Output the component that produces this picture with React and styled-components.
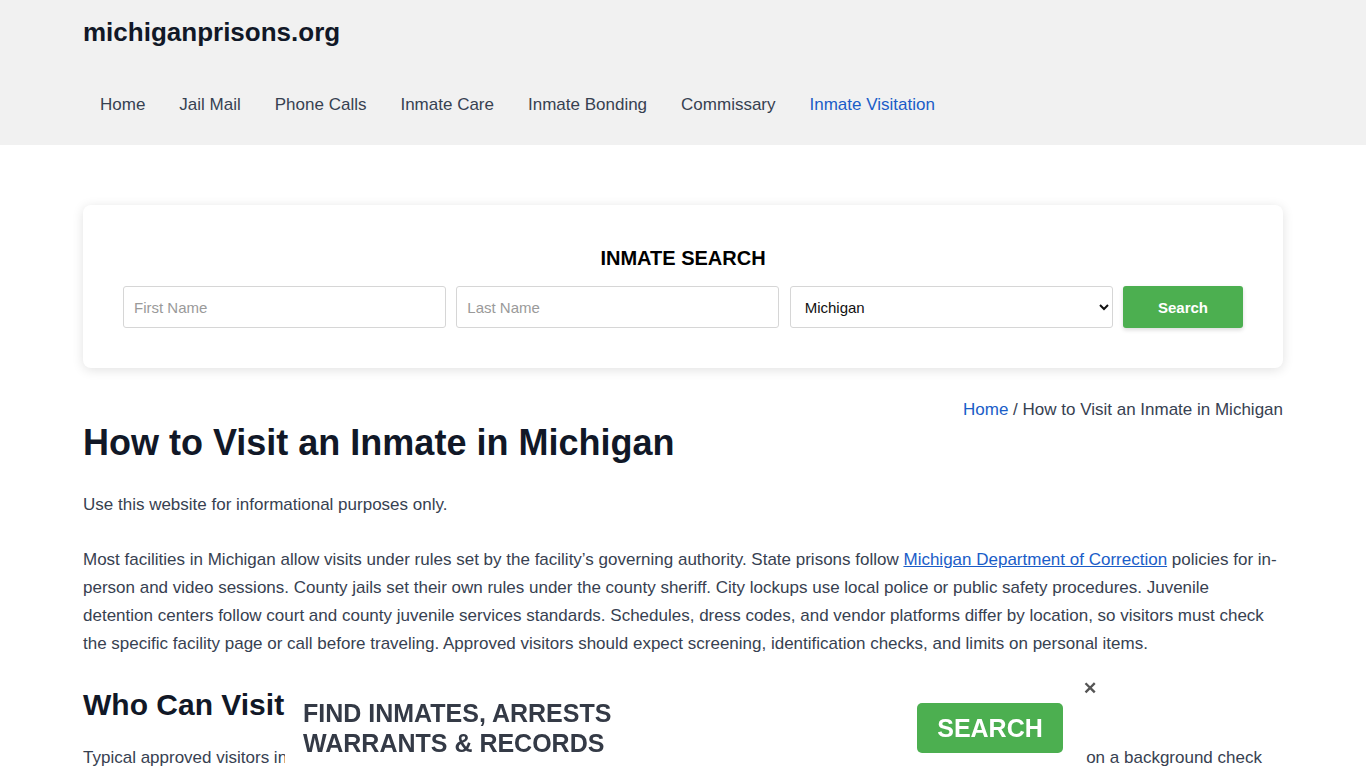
import React from "react";
import styled, { createGlobalStyle } from "styled-components";

const GlobalStyle = createGlobalStyle`
	* { box-sizing: border-box; }
	body {
		margin: 0;
		background: #fff;
		font-family: "Liberation Sans", Arial, sans-serif;
		color: #374151;
	}
`;

const Header = styled.header`
	background-color: #f1f1f1;
	height: 145px;
`;

const Container = styled.div`
	width: 1200px;
	margin: 0 auto;
`;

const Logo = styled.a`
	display: inline-block;
	padding-top: 17px;
	font-size: 26px;
	font-weight: 700;
	color: #111827;
	text-decoration: none;
	line-height: 30px;
`;

const Nav = styled.nav`
	display: flex;
	margin-top: 46px;
`;

const NavItem = styled.a`
	padding: 0 17px;
	font-size: 17px;
	line-height: 24px;
	color: ${(props) => (props.$active ? "#1a5dc8" : "#374151")};
	text-decoration: none;
`;

const SearchCard = styled.div`
	margin-top: 60px;
	background: #fff;
	border-radius: 8px;
	box-shadow: 0 2px 12px rgba(0, 0, 0, 0.12);
	padding: 41px 40px 40px;
	height: 163px;
`;

const SearchTitle = styled.div`
	text-align: center;
	font-size: 20px;
	font-weight: 700;
	color: #000;
	line-height: 24px;
	margin-bottom: 16px;
`;

const SearchRow = styled.div`
	display: flex;
	gap: 10.33px;
`;

const TextInput = styled.input`
	flex: 1;
	min-width: 0;
	height: 42px;
	border: 1px solid #d6d6d6;
	border-radius: 3px;
	padding: 0 10px;
	font-family: "Liberation Sans", Arial, sans-serif;
	font-size: 15px;
	color: #333;

	&::placeholder {
		color: #9a9a9a;
	}
`;

const StateSelect = styled.select`
	flex: 1;
	min-width: 0;
	height: 42px;
	border: 1px solid #d6d6d6;
	border-radius: 3px;
	padding: 0 10px;
	font-family: "Liberation Sans", Arial, sans-serif;
	font-size: 15px;
	color: #111;
	background: #fff;
`;

const SearchButton = styled.button`
	width: 120px;
	height: 42px;
	border: none;
	border-radius: 3px;
	background: #4caf50;
	color: #fff;
	font-family: "Liberation Sans", Arial, sans-serif;
	font-weight: 700;
	font-size: 15px;
	box-shadow: 0 2px 4px rgba(0, 0, 0, 0.15);
`;

const Breadcrumb = styled.div`
	text-align: right;
	margin-top: 31px;
	font-size: 17px;
	line-height: 22px;
	color: #374151;

	a {
		color: #1a5dc8;
		text-decoration: none;
	}
`;

const Title = styled.h1`
	margin: 0;
	font-size: 36px;
	line-height: 44px;
	font-weight: 700;
	color: #111827;
`;

const Paragraph = styled.p`
	margin: ${(props) => props.$top || "27px"} 0 0;
	font-size: 17px;
	line-height: 28px;
	color: #374151;

	a {
		color: #1a5dc8;
	}
`;

const SubTitle = styled.h2`
	margin: 29px 0 0;
	font-size: 30px;
	line-height: 36px;
	font-weight: 700;
	color: #111827;
`;

const AdBar = styled.div`
	position: fixed;
	left: 285px;
	bottom: 0;
	width: 796px;
	height: 78px;
	background: #fff;
	display: flex;
	align-items: flex-start;
	justify-content: space-between;
	padding: 8px 18px 0 18px;
`;

const AdText = styled.div`
	font-size: 25px;
	line-height: 30px;
	font-weight: 700;
	color: #343a46;
`;

const AdButton = styled.button`
	width: 146px;
	height: 50px;
	border: none;
	border-radius: 5px;
	background: #4caf50;
	color: #fff;
	font-family: "Liberation Sans", Arial, sans-serif;
	font-size: 25px;
	font-weight: 700;
	margin-top: 5px;
`;

const AdClose = styled.span`
	position: absolute;
	right: -16px;
	top: -11px;
	font-size: 17px;
	line-height: 20px;
	color: #555;
	font-weight: 700;
`;

export default function App() {
	const navItems = [
		"Home",
		"Jail Mail",
		"Phone Calls",
		"Inmate Care",
		"Inmate Bonding",
		"Commissary",
		"Inmate Visitation",
	];

	return (
		<>
			<GlobalStyle />
			<Header>
				<Container>
					<Logo href="#">michiganprisons.org</Logo>
					<Nav>
						{navItems.map((item) => (
							<NavItem
								key={item}
								href="#"
								$active={item === "Inmate Visitation"}>
								{item}
							</NavItem>
						))}
					</Nav>
				</Container>
			</Header>
			<Container>
				<SearchCard>
					<SearchTitle>INMATE SEARCH</SearchTitle>
					<SearchRow>
						<TextInput placeholder="First Name" />
						<TextInput placeholder="Last Name" />
						<StateSelect defaultValue="Michigan">
							<option>Michigan</option>
						</StateSelect>
						<SearchButton>Search</SearchButton>
					</SearchRow>
				</SearchCard>
				<Breadcrumb>
					<a href="#">Home</a> / How to Visit an Inmate in Michigan
				</Breadcrumb>
				<Title>How to Visit an Inmate in Michigan</Title>
				<Paragraph $top="26px">
					Use this website for informational purposes only.
				</Paragraph>
				<Paragraph>
					Most facilities in Michigan allow visits under rules set by
					the facility’s governing authority. State prisons follow{" "}
					<a href="#">Michigan Department of Correction</a> policies
					for in-person and video sessions. County jails set their own
					rules under the county sheriff. City lockups use local police
					or public safety procedures. Juvenile detention centers
					follow court and county juvenile services standards.
					Schedules, dress codes, and vendor platforms differ by
					location, so visitors must check the specific facility page
					or call before traveling. Approved visitors should expect
					screening, identification checks, and limits on personal
					items.
				</Paragraph>
				<SubTitle>Who Can Visit an Inmate in Michigan</SubTitle>
				<Paragraph $top="21px">
					Typical approved visitors include immediate family members,
					spouses, close friends, attorneys, and clergy, with approvals
					depending on a background check and a review of facility
					records.
				</Paragraph>
			</Container>
			<AdBar>
				<AdText>
					FIND INMATES, ARRESTS
					<br />
					WARRANTS &amp; RECORDS
				</AdText>
				<AdButton>SEARCH</AdButton>
				<AdClose>✕</AdClose>
			</AdBar>
		</>
	);
}
